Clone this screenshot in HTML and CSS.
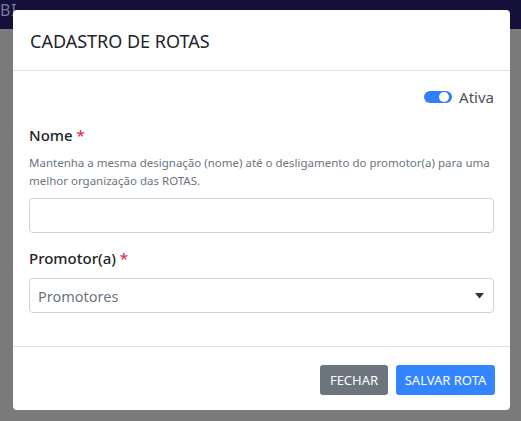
FILE: index.html
```html
<!DOCTYPE html>
<html lang="pt-BR">
<head>
<meta charset="utf-8">
<title>Cadastro de Rotas</title>
<link rel="stylesheet" href="styles.css">
</head>
<body>
<div class="topbar"><span class="brand">BI</span></div>
<div class="page"></div>
<div class="modal">
  <div class="modal-header">
    <h5 class="modal-title">CADASTRO DE ROTAS</h5>
  </div>
  <div class="modal-body">
    <div class="switch-row">
      <label class="switch">
        <span class="switch-track"><span class="switch-knob"></span></span>
        <span class="switch-label">Ativa</span>
      </label>
    </div>
    <div class="field">
      <label class="field-label">Nome <span class="req">*</span></label>
      <p class="help">Mantenha a mesma designação (nome) até o desligamento do promotor(a) para uma melhor organização das ROTAS.</p>
      <input class="control" type="text">
    </div>
    <div class="field field-select">
      <label class="field-label">Promotor(a) <span class="req">*</span></label>
      <div class="control select">
        <span class="placeholder">Promotores</span>
        <svg class="caret" width="9" height="6" viewBox="0 0 9 6"><path d="M0 0H9L4.5 5.5Z" fill="#333"/></svg>
      </div>
    </div>
  </div>
  <div class="modal-footer">
    <button class="btn btn-secondary">FECHAR</button>
    <button class="btn btn-primary">SALVAR ROTA</button>
  </div>
</div>
</body>
</html>
```

FILE: styles.css
```css
* { box-sizing: border-box; }
html, body { margin: 0; padding: 0; }
body {
  width: 521px;
  height: 421px;
  overflow: hidden;
  background: #7a7a7a;
  font-family: "Noto Sans", "Open Sans", sans-serif;
  color: #212529;
}
.topbar {
  height: 29px;
  background: #15103a;
}
.brand {
  display: block;
  color: #7d76a0;
  font-size: 16px;
  line-height: 20px;
  padding-left: 0;
  letter-spacing: 0.5px;
}
.modal {
  position: absolute;
  left: 13px;
  top: 10px;
  width: 497px;
  height: 400px;
  background: #fff;
  border-radius: 4px;
  display: flex;
  flex-direction: column;
}
.modal-header {
  height: 61px;
  border-bottom: 1px solid #dee2e6;
  padding: 0 17px;
  display: flex;
  align-items: center;
}
.modal-title {
  margin: 0;
  font-size: 18px;
  font-weight: 400;
  color: #212529;
  padding-top: 1px;
}
.modal-body {
  padding: 16px 16px 0;
  flex: 1;
}
.switch-row {
  display: flex;
  justify-content: flex-end;
  height: 24px;
  align-items: center;
  margin-top: -2px;
}
.switch { display: flex; align-items: center; gap: 7px; }
.switch-track {
  width: 28px;
  height: 12px;
  border-radius: 6px;
  background: #2f7ff7;
  position: relative;
  display: block;
}
.switch-knob {
  position: absolute;
  right: 3px;
  top: 1px;
  width: 10px;
  height: 10px;
  border-radius: 50%;
  background: #fff;
}
.switch-label {
  font-size: 15px;
  color: #4d5156;
}
.field { margin-top: 15px; }
.field-label {
  display: block;
  font-size: 15px;
  font-weight: 500;
  line-height: 22px;
  color: #212529;
}
.req { color: #dc3545; }
.help {
  margin: 8px 0 8px;
  font-size: 11.5px;
  line-height: 18px;
  color: #6c757d;
}
.control {
  display: block;
  width: 100%;
  height: 35px;
  border: 1px solid #ced4da;
  border-radius: 4px;
  background: #fff;
  font: inherit;
}
.field-select { margin-top: 14px; }
.field-select .field-label { margin-bottom: 9px; }
.select {
  display: flex;
  align-items: center;
  justify-content: space-between;
  padding: 0 9px 0 8px;
}
.placeholder { font-size: 14.5px; color: #6c757d; }
.caret { display: block; }
.modal-footer {
  height: 64px;
  border-top: 1px solid #dee2e6;
  display: flex;
  justify-content: flex-end;
  align-items: center;
  gap: 8px;
  padding: 3px 15px 0;
}
.btn {
  border: 0;
  height: 30px;
  border-radius: 3px;
  color: #fff;
  font-family: inherit;
  font-size: 13px;
  padding: 0;
  white-space: nowrap;
  cursor: pointer;
}
.btn-secondary { background: #6c757d; width: 68px; }
.btn-primary { background: #3385ff; width: 99px; }
```
